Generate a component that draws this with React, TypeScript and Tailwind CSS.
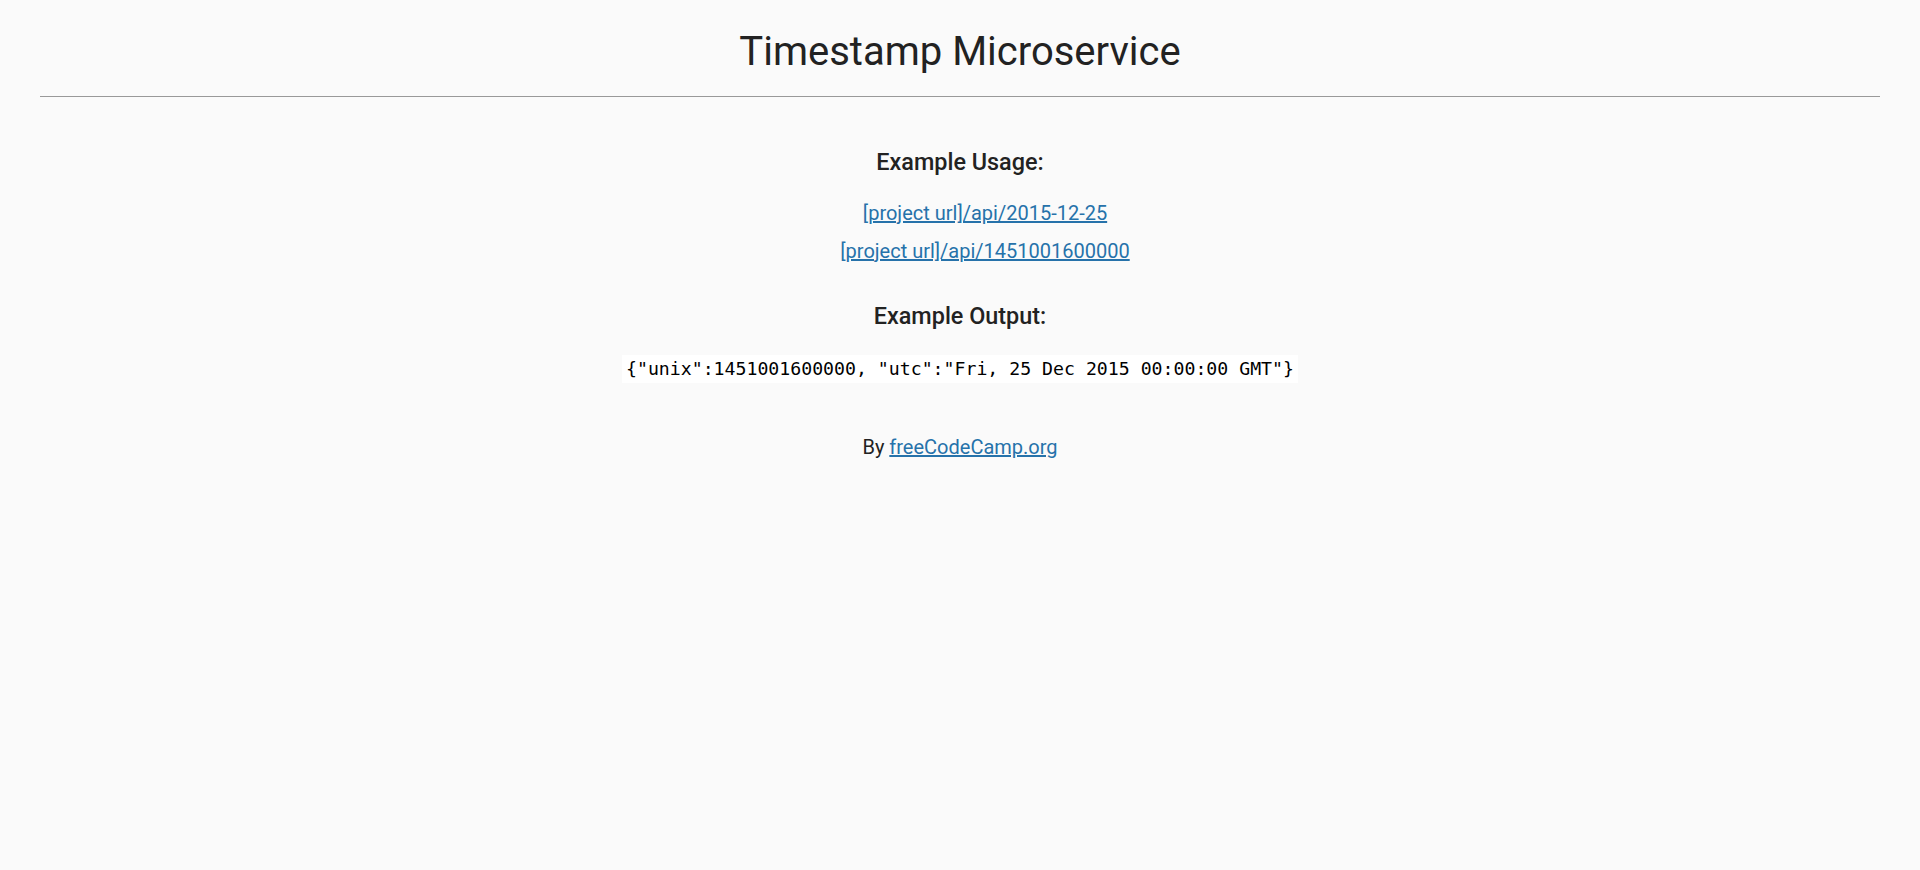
export default function App() {
  return (
    <div className="min-h-[870px] bg-[#fafafa] text-[#222] font-['Roboto',sans-serif] text-center">
      <h1 className="pt-[28px] text-[40px] leading-[48px] font-normal">Timestamp Microservice</h1>
      <hr className="mx-[40px] mt-[20px] border-t border-[#999]" />
      <div>
        <h3 className="mt-[51px] text-[23.4px] leading-[28px] font-medium">Example Usage:</h3>
        <ul className="mt-[18px] pl-[50px] text-[20px] leading-[38px]">
          <li>
            <a href="#" className="text-[#2672aa] underline">[project url]/api/2015-12-25</a>
          </li>
          <li>
            <a href="#" className="text-[#2672aa] underline">[project url]/api/1451001600000</a>
          </li>
        </ul>
        <h3 className="mt-[32px] text-[23.4px] leading-[28px] font-medium">Example Output:</h3>
        <p className="mt-[25px] leading-[28px]">
          <code className="inline-block align-top bg-white px-[4px] text-[18.2px] leading-[28px] text-black font-['DejaVu_Sans_Mono',monospace]">
            {'{"unix":1451001600000, "utc":"Fri, 25 Dec 2015 00:00:00 GMT"}'}
          </code>
        </p>
      </div>
      <p className="mt-[50px] text-[20px] leading-[28px]">
        By <a href="#" className="text-[#2672aa] underline">freeCodeCamp.org</a>
      </p>
    </div>
  )
}
